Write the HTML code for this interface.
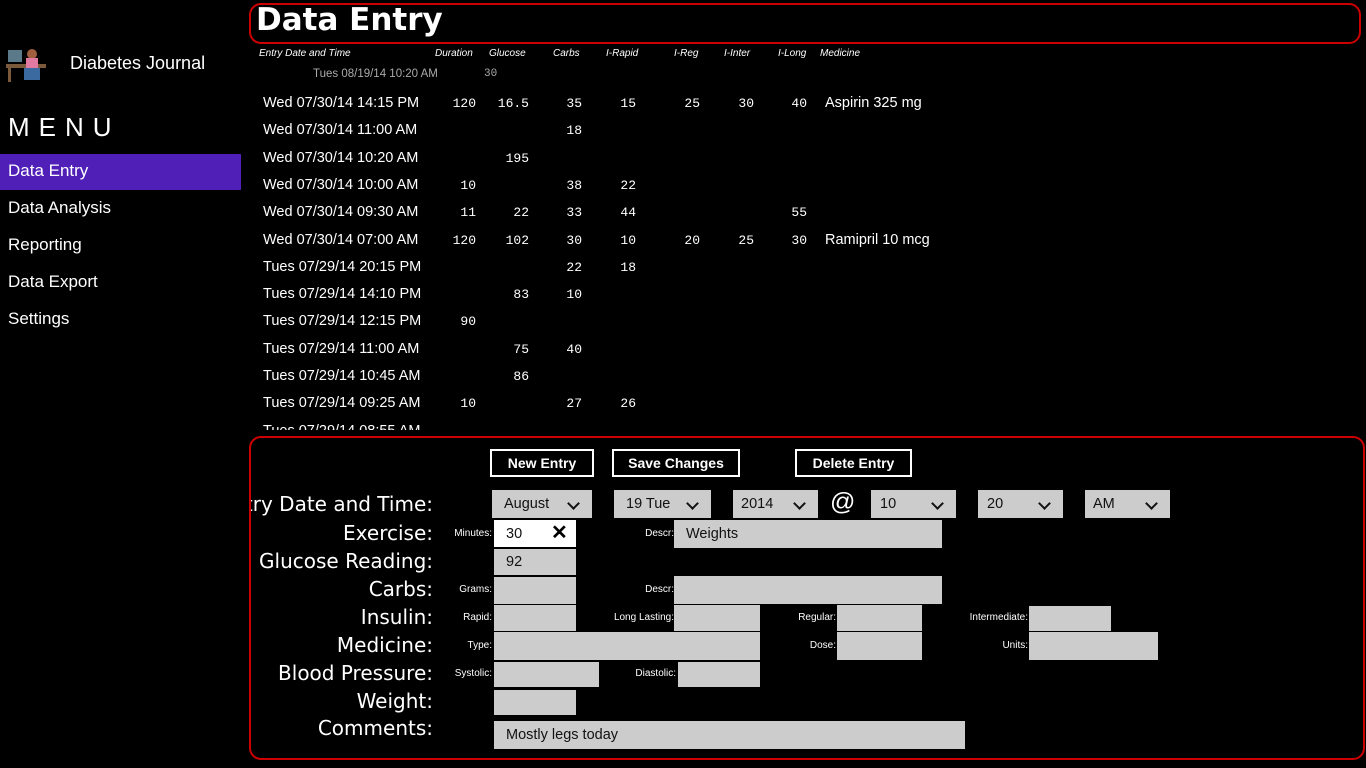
<!DOCTYPE html>
<html><head><meta charset="utf-8"><style>
*{margin:0;padding:0;box-sizing:border-box}
body{width:1366px;height:768px;background:#000;color:#fff;font-family:"Liberation Sans",sans-serif;position:relative;overflow:hidden}
.a{position:absolute;white-space:nowrap}
.g{position:absolute;background:#cccccc;color:#111;font-size:14.5px;padding-left:12px;display:flex;align-items:center}
.dd::after{content:"";position:absolute;right:14px;top:9px;width:7px;height:7px;border-right:2px solid #111;border-bottom:2px solid #111;transform:rotate(45deg)}
.btn{position:absolute;border:2px solid #fff;font-size:14px;font-weight:bold;text-align:center;line-height:24px}
.h{font-style:italic;font-size:10px}
.r{font-size:14.5px}
.n{font-family:"Liberation Mono",monospace;font-size:13px;text-align:right;width:40px}
.lbl{position:absolute;font-family:"DejaVu Sans",sans-serif;font-size:20px;text-align:right;white-space:nowrap}
.sm{position:absolute;font-size:10px;text-align:right;white-space:nowrap}
</style></head><body>
<div class="a" style="left:4px;top:44px;width:46px;height:42px">
<svg width="46" height="42"><rect x="4" y="6" width="14" height="12" fill="#5a7a8a"/><rect x="2" y="20" width="40" height="4" fill="#7a5a3a"/><circle cx="28" cy="10" r="5" fill="#a06040"/><rect x="22" y="14" width="12" height="10" fill="#e07aa0"/><rect x="20" y="24" width="16" height="12" fill="#3a6aa0"/><rect x="4" y="24" width="3" height="14" fill="#7a5a3a"/></svg></div>
<div class="a" style="left:70px;top:53px;font-size:18px">Diabetes Journal</div>
<div class="a" style="left:8px;top:112px;font-size:26px;letter-spacing:9px">MENU</div>
<div class="a" style="left:0;top:154px;width:241px;height:36px;background:#4f1fb8"></div>
<div class="a" style="left:8px;top:161px;font-size:17px">Data Entry</div>
<div class="a" style="left:8px;top:198px;font-size:17px">Data Analysis</div>
<div class="a" style="left:8px;top:235px;font-size:17px">Reporting</div>
<div class="a" style="left:8px;top:272px;font-size:17px">Data Export</div>
<div class="a" style="left:8px;top:309px;font-size:17px">Settings</div>
<div class="a" style="left:249px;top:3px;width:1112px;height:41px;border:2px solid #c00;border-radius:12px"></div>
<div class="a" style="left:256px;top:2px;font-size:31px;font-weight:bold;font-family:'DejaVu Sans',sans-serif">Data Entry</div>
<div class="a h" style="left:259px;top:48px">Entry Date and Time</div>
<div class="a h" style="left:435px;top:48px">Duration</div>
<div class="a h" style="left:489px;top:48px">Glucose</div>
<div class="a h" style="left:553px;top:48px">Carbs</div>
<div class="a h" style="left:606px;top:48px">I-Rapid</div>
<div class="a h" style="left:674px;top:48px">I-Reg</div>
<div class="a h" style="left:724px;top:48px">I-Inter</div>
<div class="a h" style="left:778px;top:48px">I-Long</div>
<div class="a h" style="left:820px;top:48px">Medicine</div>
<div class="a" style="left:313px;top:68px;font-size:11.5px;color:#aaa">Tues 08/19/14 10:20 AM</div>
<div class="a" style="left:484px;top:68px;font-size:11px;color:#aaa;font-family:'Liberation Mono',monospace">30</div>
<div class="a" style="left:0;top:92px;width:1366px;height:338px;overflow:hidden">
<div id="rows"></div>
</div>
<script>
var d=[["Wed 07/30/14 14:15 PM","120","16.5","35","15","25","30","40","Aspirin 325 mg"],
["Wed 07/30/14 11:00 AM","","","18","","","","",""],
["Wed 07/30/14 10:20 AM","","195","","","","","",""],
["Wed 07/30/14 10:00 AM","10","","38","22","","","",""],
["Wed 07/30/14 09:30 AM","11","22","33","44","","","55",""],
["Wed 07/30/14 07:00 AM","120","102","30","10","20","25","30","Ramipril 10 mcg"],
["Tues 07/29/14 20:15 PM","","","22","18","","","",""],
["Tues 07/29/14 14:10 PM","","83","10","","","","",""],
["Tues 07/29/14 12:15 PM","90","","","","","","",""],
["Tues 07/29/14 11:00 AM","","75","40","","","","",""],
["Tues 07/29/14 10:45 AM","","86","","","","","",""],
["Tues 07/29/14 09:25 AM","10","","27","26","","","",""],
["Tues 07/29/14 08:55 AM","","","","","","","",""]];
var xs=[476,529,582,636,700,754,807];var h="";
d.forEach(function(r,i){var y=i*27.3+3;
h+='<div class="a r" style="left:263px;top:'+y+'px">'+r[0]+'</div>';
for(var k=0;k<7;k++)if(r[k+1])h+='<div class="a n" style="left:'+(xs[k]-40)+'px;top:'+(y+1)+'px">'+r[k+1]+'</div>';
if(r[8])h+='<div class="a r" style="left:825px;top:'+y+'px">'+r[8]+'</div>';});
document.getElementById('rows').innerHTML=h;
</script>
<div class="a" style="left:249px;top:436px;width:1116px;height:324px;border:2px solid #c00;border-radius:12px"></div>
<div class="btn" style="left:490px;top:449px;width:104px;height:28px">New Entry</div>
<div class="btn" style="left:612px;top:449px;width:128px;height:28px">Save Changes</div>
<div class="btn" style="left:795px;top:449px;width:117px;height:28px">Delete Entry</div>
<div class="a" style="left:251px;top:490px;width:183px;height:260px;overflow:hidden">
<div class="lbl" style="right:1px;top:2px">Entry Date and Time:</div>
<div class="lbl" style="right:1px;top:31px">Exercise:</div>
<div class="lbl" style="right:1px;top:59px">Glucose Reading:</div>
<div class="lbl" style="right:1px;top:87px">Carbs:</div>
<div class="lbl" style="right:1px;top:115px">Insulin:</div>
<div class="lbl" style="right:1px;top:143px">Medicine:</div>
<div class="lbl" style="right:1px;top:171px">Blood Pressure:</div>
<div class="lbl" style="right:1px;top:199px">Weight:</div>
<div class="lbl" style="right:1px;top:226px">Comments:</div>
</div>
<div class="g dd" style="left:492px;top:490px;width:100px;height:28px">August</div>
<div class="g dd" style="left:614px;top:490px;width:97px;height:28px">19 Tue</div>
<div class="g dd" style="left:733px;top:490px;width:85px;height:28px;padding-left:8px">2014</div>
<div class="a" style="left:830px;top:488px;font-size:25px">@</div>
<div class="g dd" style="left:871px;top:490px;width:85px;height:28px;padding-left:9px">10</div>
<div class="g dd" style="left:978px;top:490px;width:85px;height:28px;padding-left:9px">20</div>
<div class="g dd" style="left:1085px;top:490px;width:85px;height:28px;padding-left:8px">AM</div>
<div class="sm" style="right:874px;top:528px">Minutes:</div>
<div class="g" style="left:494px;top:520px;width:82px;height:27px;background:#fff">30</div>
<div class="a" style="left:551px;top:520px;font-size:20px;color:#000;font-weight:bold">✕</div>
<div class="sm" style="right:692px;top:528px">Descr:</div>
<div class="g" style="left:674px;top:520px;width:268px;height:28px">Weights</div>
<div class="g" style="left:494px;top:549px;width:82px;height:26px">92</div>
<div class="sm" style="right:874px;top:584px">Grams:</div>
<div class="g" style="left:494px;top:577px;width:82px;height:27px"></div>
<div class="sm" style="right:692px;top:584px">Descr:</div>
<div class="g" style="left:674px;top:576px;width:268px;height:28px"></div>
<div class="sm" style="right:874px;top:612px">Rapid:</div>
<div class="g" style="left:494px;top:605px;width:82px;height:26px"></div>
<div class="sm" style="right:692px;top:612px">Long Lasting:</div>
<div class="g" style="left:674px;top:605px;width:86px;height:26px"></div>
<div class="sm" style="right:530px;top:612px">Regular:</div>
<div class="g" style="left:837px;top:605px;width:85px;height:26px"></div>
<div class="sm" style="right:338px;top:612px">Intermediate:</div>
<div class="g" style="left:1029px;top:606px;width:82px;height:25px"></div>
<div class="sm" style="right:874px;top:640px">Type:</div>
<div class="g" style="left:494px;top:632px;width:266px;height:28px"></div>
<div class="sm" style="right:530px;top:640px">Dose:</div>
<div class="g" style="left:837px;top:632px;width:85px;height:28px"></div>
<div class="sm" style="right:338px;top:640px">Units:</div>
<div class="g" style="left:1029px;top:632px;width:129px;height:28px"></div>
<div class="sm" style="right:874px;top:668px">Systolic:</div>
<div class="g" style="left:494px;top:662px;width:105px;height:25px"></div>
<div class="sm" style="right:690px;top:668px">Diastolic:</div>
<div class="g" style="left:678px;top:662px;width:82px;height:25px"></div>
<div class="g" style="left:494px;top:690px;width:82px;height:25px"></div>
<div class="g" style="left:494px;top:721px;width:471px;height:28px">Mostly legs today</div>
</body></html>
